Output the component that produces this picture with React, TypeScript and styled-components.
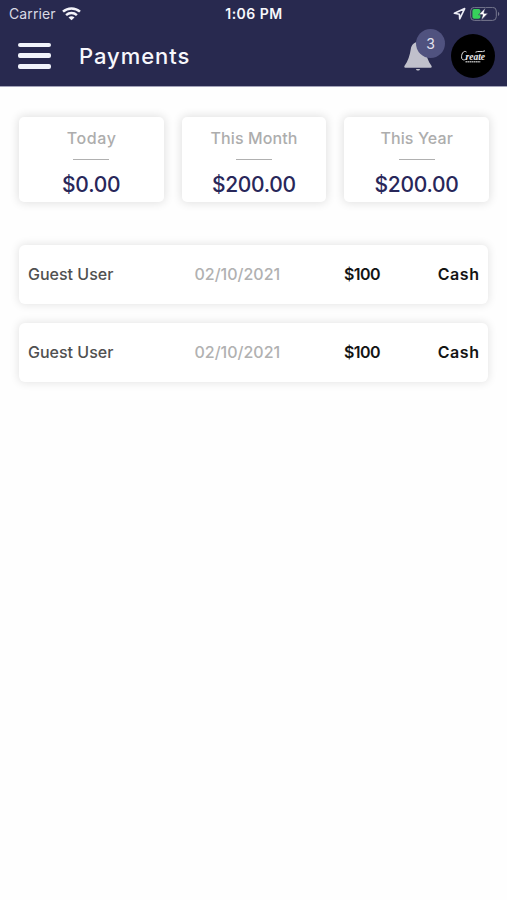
import React from "react";
import styled, { createGlobalStyle } from "styled-components";

const Global = createGlobalStyle`
  * { box-sizing: border-box; }
  body { margin: 0; background: #fefefe; font-family: Inter, "Open Sans", sans-serif; }
`;

const Screen = styled.div`
  min-height: 900px;
  background: #fefefe;
`;

const Header = styled.header`
  height: 87px;
  background: #28294f;
  border-bottom: 1px solid #a3a3b9;
  color: #f7f7fc;
`;

const StatusBar = styled.div`
  height: 28px;
  padding: 0 7px 0 9px;
  display: grid;
  grid-template-columns: 1fr auto 1fr;
  align-items: center;
  font-size: 14px;
  line-height: 28px;
`;

const Carrier = styled.div`
  display: flex;
  align-items: center;
  gap: 6px;
  color: #d9d9e4;
  letter-spacing: 0.12px;
`;

const Clock = styled.div`
  font-weight: 600;
  letter-spacing: 0.5px;
  margin-right: 1px;
`;

const StatusIcons = styled.div`
  display: flex;
  justify-content: flex-end;
  align-items: center;
  gap: 4px;
`;

const NavBar = styled.div`
  height: 55px;
  display: flex;
  align-items: center;
  padding: 0 12px 0 18px;
`;

const MenuButton = styled.button`
  width: 33px;
  height: 26px;
  padding: 0;
  border: 0;
  background: none;
  display: flex;
  flex-direction: column;
  justify-content: space-between;
`;

const MenuLine = styled.span`
  display: block;
  width: 33px;
  height: 4.6px;
  border-radius: 2px;
  background: #f1f3fb;
`;

const Title = styled.h1`
  flex: 1;
  margin: 0 0 0 28px;
  font-size: 22px;
  font-weight: 500;
  line-height: 30px;
  letter-spacing: 0.95px;
`;

const Bell = styled.div`
  position: relative;
  width: 28px;
  height: 30px;
  margin: 0 19px 0 0;
`;

const Badge = styled.span`
  position: absolute;
  left: 12px;
  top: -12px;
  width: 29px;
  height: 29px;
  border-radius: 50%;
  background: #50527f;
  color: #e2e2ee;
  font-size: 14px;
  line-height: 29px;
  text-align: center;
`;

const Avatar = styled.svg`
  display: block;
  width: 44px;
  height: 44px;
`;

const Summary = styled.section`
  display: grid;
  grid-template-columns: repeat(3, 1fr);
  gap: 18px;
  padding: 30px 18px 0 19px;
`;

const Card = styled.div`
  height: 85px;
  border-radius: 5px;
  background: #fff;
  box-shadow: 0 0 10px 1px rgba(0, 0, 0, 0.12);
  display: flex;
  flex-direction: column;
  align-items: center;
  padding-top: 9px;
`;

const CardLabel = styled.div<{ $track: number }>`
  font-size: 16px;
  font-weight: 500;
  line-height: 24px;
  color: #adadad;
  letter-spacing: ${(p) => p.$track}px;
  margin-right: ${(p) => -p.$track}px;
`;

const Rule = styled.div`
  width: 36px;
  height: 1px;
  margin: 9px 0 8px;
  background: #b0b0b0;
`;

const Amount = styled.div<{ $track: number }>`
  font-size: 21px;
  font-weight: 500;
  line-height: 34px;
  color: #28275a;
  letter-spacing: ${(p) => p.$track}px;
  margin-right: ${(p) => -p.$track}px;
`;

const List = styled.section`
  display: flex;
  flex-direction: column;
  gap: 19px;
  padding: 43px 19px 0;
`;

const Row = styled.div`
  height: 59px;
  border-radius: 6px;
  background: #fff;
  box-shadow: 0 0 8px 1px rgba(0, 0, 0, 0.1);
  display: grid;
  grid-template-columns: 166.5px 149.5px 1fr auto;
  align-items: center;
  padding: 0 9px 1px;
  font-size: 16px;
  font-weight: 500;
`;

const Cell = styled.span<{ $color?: string; $track?: number; $bold?: boolean }>`
  color: ${(p) => p.$color ?? "#141414"};
  letter-spacing: ${(p) => p.$track ?? 0}px;
  margin-right: ${(p) => -(p.$track ?? 0)}px;
  font-weight: ${(p) => (p.$bold ? 600 : 500)};
  white-space: nowrap;
`;

const totals = [
  { label: "Today", amount: "$0.00", labelTrack: 0.6, amountTrack: -0.2 },
  { label: "This Month", amount: "$200.00", labelTrack: 0.1, amountTrack: -0.3 },
  { label: "This Year", amount: "$200.00", labelTrack: 0.1, amountTrack: -0.3 },
];

const payments = [
  { id: 1, name: "Guest User", date: "02/10/2021", amount: "$100", method: "Cash" },
  { id: 2, name: "Guest User", date: "02/10/2021", amount: "$100", method: "Cash" },
];

export default function App() {
  return (
    <Screen>
      <Global />
      <Header>
        <StatusBar>
          <Carrier>
            Carrier
            <svg width="19" height="14" viewBox="0 0 19 14" fill="none" stroke="#f4f4fa" strokeWidth="2.5">
              <path d="M1 4.7C5.8.3 13.200.3 18 4.700" />
              <path d="M4.100 8.100c3.100-2.800 7.700-2.800 10.800 0" />
              <path d="M9.500 13.300 6.500 10.400c1.700-1.500 4.300-1.500 6 0z" fill="#f4f4fa" stroke="none" />
            </svg>
          </Carrier>
          <Clock>1:06 PM</Clock>
          <StatusIcons>
            <svg width="13" height="15" viewBox="0 0 13 15" fill="none" stroke="#eeeef7" strokeWidth="1.6" strokeLinejoin="round">
              <path d="M11.700 1.600 1.400 6.300l5 .9.300 4.700z" />
            </svg>
            <svg width="30" height="15" viewBox="0 0 30 15" fill="none">
              <rect x=".7" y=".4" width="25.600" height="13" rx="3.600" stroke="#77788f" />
              <path d="M28 4.700v4.400c1.800-.7 1.800-3.700 0-4.400z" fill="#77788f" />
              <rect x="2.400" y="2.100" width="8" height="9.600" rx="1.800" fill="#37d05b" />
              <path d="M15.500.8 8.600 7.700h4l-1.500 5.700 7-7.200h-4.200z" fill="#fff" stroke="#28294f" strokeWidth=".7" />
            </svg>
          </StatusIcons>
        </StatusBar>
        <NavBar>
          <MenuButton aria-label="Menu">
            <MenuLine />
            <MenuLine />
            <MenuLine />
          </MenuButton>
          <Title>Payments</Title>
          <Bell>
            <svg width="28" height="30" viewBox="0 0 28 30">
              <path d="M14 1C10 1 7.500 4 6.800 8 6 14 4 20.500.4 25q-.5 1.700 1 1.700h25.200q1.500 0 1-1.700C24 20.500 22 14 21.200 8 20.500 4 18 1 14 1z" fill="#c0c0cb" />
              <path d="M12 28h4c-.3 2-3.700 2-4 0z" fill="#c0c0cb" />
            </svg>
            <Badge>3</Badge>
          </Bell>
          <Avatar viewBox="0 0 44 44" role="img" aria-label="Create">
            <circle cx="22" cy="22" r="22" fill="#000" />
            <path d="M15.500 18c-3-2.300-5.600 2.500-4.800 6.200.6 2.300 3.200 2.100 5 .3" fill="none" stroke="#ddd" strokeWidth="1" />
            <text x="14.500" y="25.500" fontFamily="Liberation Serif, serif" fontSize="11" fontStyle="italic" fontWeight="700" fill="#eee" textLength="19.500" lengthAdjust="spacingAndGlyphs">reate</text>
            <path d="M24.500 18.200c3-1.800 6 .5 9.500-1.400" fill="none" stroke="#ddd" strokeWidth="1" />
            <path d="M14.500 27.700h15" stroke="#aaa" strokeWidth="1.500" strokeDasharray="1.700 .4" />
          </Avatar>
        </NavBar>
      </Header>
      <Summary>
        {totals.map((t) => (
          <Card key={t.label}>
            <CardLabel $track={t.labelTrack}>{t.label}</CardLabel>
            <Rule />
            <Amount $track={t.amountTrack}>{t.amount}</Amount>
          </Card>
        ))}
      </Summary>
      <List>
        {payments.map((p) => (
          <Row key={p.id}>
            <Cell $color="#505050">{p.name}</Cell>
            <Cell $color="#b1b1b1">{p.date}</Cell>
            <Cell $bold $track={-0.55}>{p.amount}</Cell>
            <Cell $bold $track={0.6}>{p.method}</Cell>
          </Row>
        ))}
      </List>
    </Screen>
  );
}
